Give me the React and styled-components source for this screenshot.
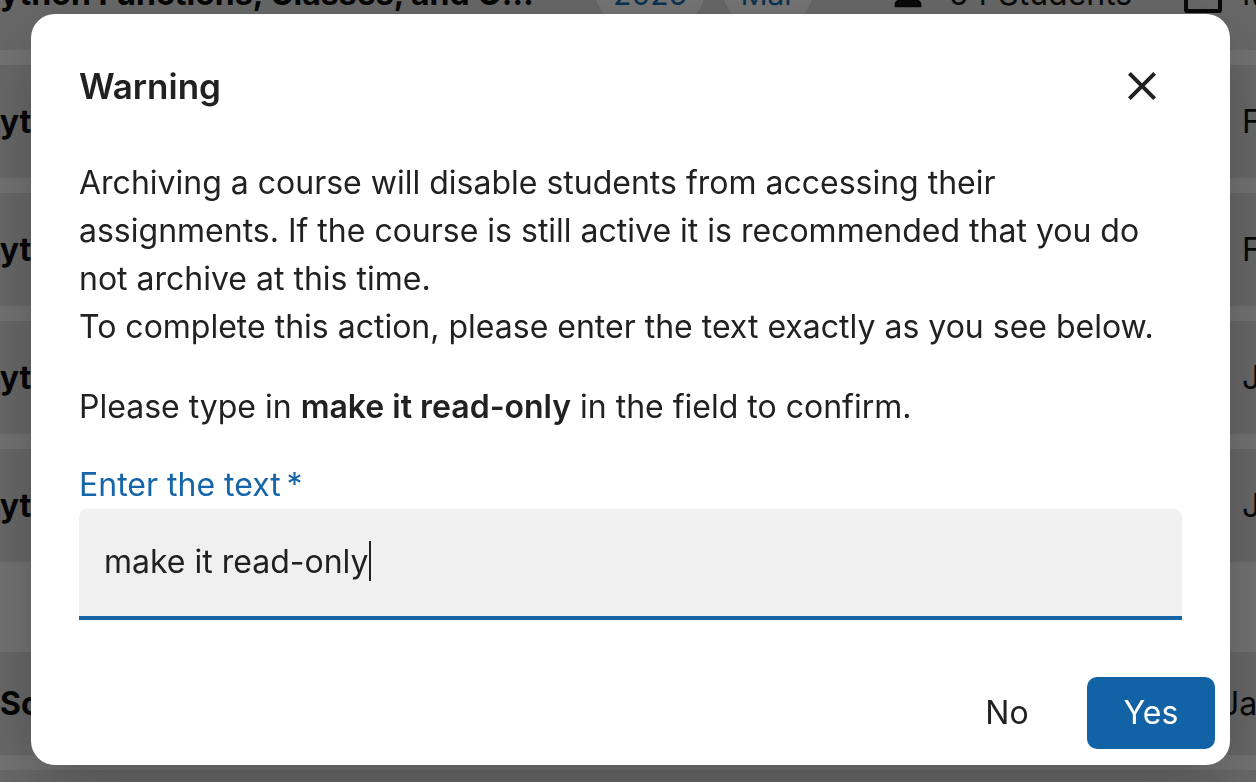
import React from "react"
import styled, { createGlobalStyle } from "styled-components"

const GlobalStyle = createGlobalStyle`
  html, body {
    margin: 0;
    padding: 0;
    height: 100%;
    overflow: hidden;
  }
  body {
    font-family: Inter, "Liberation Sans", sans-serif;
    background: #e8e8e8;
    color: #212121;
  }
`

// page behind the dialog (scrolled, so the first row is cut off)
const Page = styled.div`
  display: flex;
  flex-direction: column;
  gap: 15px;
  width: 1400px;
  margin: -63px 0 0 -21px;
`

const Row = styled.div`
  display: flex;
  align-items: center;
  height: ${({ h }) => h || 113}px;
  padding-left: ${({ indent }) => indent || 0}px;
  background: ${({ band }) => (band ? "#e8e8e8" : "#d2d2d2")};
  font-size: 32px;
  & > * {
    flex-shrink: 0;
  }
`

const CourseTitle = styled.div`
  width: ${({ w }) => w || 566}px;
  margin-right: ${({ w }) => (w ? 0 : 14)}px;
  font-weight: 700;
  color: #0c0c0c;
  white-space: nowrap;
  overflow: hidden;
  text-overflow: ellipsis;
`

const Pill = styled.div`
  display: flex;
  align-items: center;
  justify-content: center;
  width: ${({ w }) => w}px;
  height: 56px;
  margin-left: ${({ ml }) => ml}px;
  border-radius: 28px;
  background: #ececec;
  color: #1565a8;
  font-size: 30px;
`

const Students = styled.div`
  display: flex;
  align-items: center;
  gap: 21px;
  width: 262px;
  margin-left: 76px;
  color: #111;
  white-space: nowrap;
`

const Check = styled.div`
  width: 30px;
  height: 30px;
  margin-left: 34px;
  border: 4px solid #111;
  border-radius: 3px;
`

const DateCell = styled.div`
  margin-left: ${({ ml }) => ml}px;
  color: #111;
  white-space: nowrap;
`

// dialog
const Overlay = styled.div`
  position: fixed;
  inset: 0;
  display: flex;
  align-items: center;
  justify-content: center;
  padding: 0 0 4px 5px;
  background: rgba(0, 0, 0, 0.5);
`

const Dialog = styled.div`
  display: flex;
  flex-direction: column;
  width: 1199px;
  background: #fff;
  border-radius: 24px;
  box-shadow: 0 22px 70px rgba(0, 0, 0, 0.25);
`

const Header = styled.div`
  display: flex;
  align-items: center;
  justify-content: space-between;
  padding: 48px 48px 0;
`

const Title = styled.h2`
  margin: 0;
  font-size: 35px;
  line-height: 46px;
  font-weight: 600;
  color: #212121;
`

const CloseButton = styled.button`
  display: flex;
  align-items: center;
  justify-content: center;
  width: 48px;
  height: 48px;
  margin-right: 16px;
  padding: 0;
  border: 0;
  background: transparent;
  color: #212121;
  cursor: pointer;
`

const Content = styled.div`
  padding: 49px 48px 41px;
`

const Text = styled.p`
  margin: ${({ mt }) => mt || 0}px 0 0;
  font-size: 32px;
  line-height: 48px;
  color: #212121;

  b {
    font-weight: 600;
  }
`

const Label = styled.label`
  display: block;
  margin-top: 30px;
  font-size: 32px;
  line-height: 48px;
  color: #1565a8;
`

const Field = styled.div`
  display: flex;
  align-items: center;
  box-sizing: border-box;
  height: 111px;
  padding: 0 25px 2px;
  background: #f0f0f0;
  border-bottom: 4px solid #1565a8;
  border-radius: 8px 8px 0 0;
  font-size: 32px;
  color: #212121;
`

const Caret = styled.span`
  display: inline-block;
  width: 2px;
  height: 40px;
  margin-left: 1px;
  background: #212121;
`

const Actions = styled.div`
  display: flex;
  justify-content: flex-end;
  gap: 16px;
  padding: 16px 15px 16px 16px;
`

const ActionButton = styled.button`
  width: 128px;
  height: 72px;
  border: 0;
  border-radius: 10px;
  font-family: inherit;
  font-size: 32px;
  color: ${({ primary }) => (primary ? "#fff" : "#212121")};
  background: ${({ primary }) => (primary ? "#1262a6" : "transparent")};
  cursor: pointer;
`

const PersonIcon = () => (
  <svg width="40" height="40" viewBox="0 0 24 24" fill="#111">
    <path d="M12 12c2.21 0 4-1.79 4-4s-1.79-4-4-4-4 1.79-4 4 1.79 4 4 4m0 2c-2.67 0-8 1.34-8 4v2h16v-2c0-2.66-5.33-4-8-4" />
  </svg>
)

const CloseIcon = () => (
  <svg width="48" height="48" viewBox="0 0 24 24" fill="currentColor">
    <path d="M19 6.41 17.59 5 12 10.59 6.41 5 5 6.41 10.59 12 5 17.59 6.41 19 12 13.41 17.59 19 19 17.59 13.41 12z" />
  </svg>
)

const courses = [
  { title: "Python Functions, Classes, and Objects", date: "Mar 3, 2025" },
  { title: "Python Data Structures", date: "Feb 17, 2025" },
  { title: "Python Basics", date: "Feb 10, 2025" },
  { title: "Python for Data Science", date: "Jan 27, 2025" },
  { title: "Python Web Scraping", date: "Jan 20, 2025" },
]

const CourseRow = ({ title, date }) => (
  <Row>
    <CourseTitle>{title}</CourseTitle>
    <Pill w={108} ml={37}>2025</Pill>
    <Pill w={88} ml={20}>Mar</Pill>
    <Students>
      <PersonIcon />
      54 Students
    </Students>
    <Check />
    <DateCell ml={20}>{date}</DateCell>
  </Row>
)

export default function App() {
  return (
    <>
      <GlobalStyle />
      <Page>
        {courses.map((c) => (
          <CourseRow key={c.title} {...c} />
        ))}
        <Row band h={60} />
        <Row h={103} indent={21}>
          <CourseTitle w={400}>Software Engineering</CourseTitle>
          <DateCell ml={821}>Jan 13, 2025</DateCell>
        </Row>
        <Row />
      </Page>

      <Overlay>
        <Dialog role="dialog">
          <Header>
            <Title>Warning</Title>
            <CloseButton aria-label="close">
              <CloseIcon />
            </CloseButton>
          </Header>
          <Content>
            <Text>
              Archiving a course will disable students from accessing their
              assignments. If the course is still active it is recommended
              that you do not archive at this time.
              <br />
              To complete this action, please enter the text exactly as you
              see below.
            </Text>
            <Text mt={32}>
              Please type in <b>make it read-only</b> in the field to confirm.
            </Text>
            <Label>Enter the text&thinsp;*</Label>
            <Field>
              make it read-only
              <Caret />
            </Field>
          </Content>
          <Actions>
            <ActionButton>No</ActionButton>
            <ActionButton primary>Yes</ActionButton>
          </Actions>
        </Dialog>
      </Overlay>
    </>
  )
}
